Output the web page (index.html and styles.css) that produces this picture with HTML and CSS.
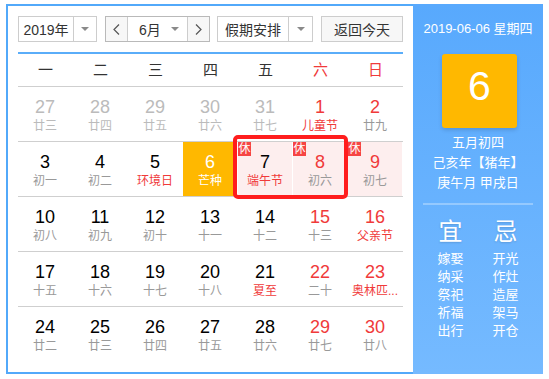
FILE: index.html
```html
<!DOCTYPE html>
<html lang="zh">
<head>
<meta charset="utf-8">
<title>万年历</title>
<link rel="stylesheet" href="styles.css">
</head>
<body>
<div class="cal">
  <div class="main">
    <div class="toolbar">
      <div class="select year">
        <span class="val">2019年</span>
        <span class="arr-box"><i class="arrow"></i></span>
      </div>
      <div class="month-group">
        <span class="nav nav-prev"><svg width="7" height="11" viewBox="0 0 7 11"><polyline points="6,0.5 1,5.5 6,10.5" fill="none" stroke="#555" stroke-width="1.2"/></svg></span>
        <span class="month"><span class="val">6月</span><i class="arrow"></i></span>
        <span class="nav nav-next"><svg width="7" height="11" viewBox="0 0 7 11"><polyline points="1,0.5 6,5.5 1,10.5" fill="none" stroke="#555" stroke-width="1.2"/></svg></span>
      </div>
      <div class="select holiday">
        <span class="val">假期安排</span>
        <span class="arr-box"><i class="arrow"></i></span>
      </div>
      <span class="today-btn">返回今天</span>
    </div>
    <div class="divider"></div>
    <div class="weekdays">
      <span>一</span><span>二</span><span>三</span><span>四</span><span>五</span><span class="red">六</span><span class="red">日</span>
    </div>
    <div class="week">
      <div class="cell other"><div class="num">27</div><div class="lunar">廿三</div></div>
      <div class="cell other"><div class="num">28</div><div class="lunar">廿四</div></div>
      <div class="cell other"><div class="num">29</div><div class="lunar">廿五</div></div>
      <div class="cell other"><div class="num">30</div><div class="lunar">廿六</div></div>
      <div class="cell other"><div class="num">31</div><div class="lunar">廿七</div></div>
      <div class="cell weekend"><div class="num">1</div><div class="lunar fest">儿童节</div></div>
      <div class="cell weekend"><div class="num">2</div><div class="lunar">廿九</div></div>
    </div>
    <div class="week">
      <div class="cell"><div class="num">3</div><div class="lunar">初一</div></div>
      <div class="cell"><div class="num">4</div><div class="lunar">初二</div></div>
      <div class="cell"><div class="num">5</div><div class="lunar fest">环境日</div></div>
      <div class="cell today"><div class="num">6</div><div class="lunar">芒种</div></div>
      <div class="cell rest-day"><span class="rest">休</span><div class="num">7</div><div class="lunar fest">端午节</div></div>
      <div class="cell rest-day weekend"><span class="rest">休</span><div class="num">8</div><div class="lunar">初六</div></div>
      <div class="cell rest-day weekend"><span class="rest">休</span><div class="num">9</div><div class="lunar">初七</div></div>
      <div class="mark"></div>
    </div>
    <div class="week">
      <div class="cell"><div class="num">10</div><div class="lunar">初八</div></div>
      <div class="cell"><div class="num">11</div><div class="lunar">初九</div></div>
      <div class="cell"><div class="num">12</div><div class="lunar">初十</div></div>
      <div class="cell"><div class="num">13</div><div class="lunar">十一</div></div>
      <div class="cell"><div class="num">14</div><div class="lunar">十二</div></div>
      <div class="cell weekend"><div class="num">15</div><div class="lunar">十三</div></div>
      <div class="cell weekend"><div class="num">16</div><div class="lunar fest">父亲节</div></div>
    </div>
    <div class="week">
      <div class="cell"><div class="num">17</div><div class="lunar">十五</div></div>
      <div class="cell"><div class="num">18</div><div class="lunar">十六</div></div>
      <div class="cell"><div class="num">19</div><div class="lunar">十七</div></div>
      <div class="cell"><div class="num">20</div><div class="lunar">十八</div></div>
      <div class="cell"><div class="num">21</div><div class="lunar fest">夏至</div></div>
      <div class="cell weekend"><div class="num">22</div><div class="lunar">二十</div></div>
      <div class="cell weekend"><div class="num">23</div><div class="lunar fest">奥林匹...</div></div>
    </div>
    <div class="week">
      <div class="cell"><div class="num">24</div><div class="lunar">廿二</div></div>
      <div class="cell"><div class="num">25</div><div class="lunar">廿三</div></div>
      <div class="cell"><div class="num">26</div><div class="lunar">廿四</div></div>
      <div class="cell"><div class="num">27</div><div class="lunar">廿五</div></div>
      <div class="cell"><div class="num">28</div><div class="lunar">廿六</div></div>
      <div class="cell weekend"><div class="num">29</div><div class="lunar">廿七</div></div>
      <div class="cell weekend"><div class="num">30</div><div class="lunar">廿八</div></div>
    </div>
  </div>
  <div class="side">
    <div class="side-date">2019-06-06 星期四</div>
    <div class="big-day">6</div>
    <div class="lunar-info">
      <div>五月初四</div>
      <div>己亥年【猪年】</div>
      <div>庚午月 甲戌日</div>
    </div>
    <div class="sep"></div>
    <div class="yiji">
      <div class="yj-col">
        <div class="yj-title">宜</div>
        <div class="yj-items"><div>嫁娶</div><div>纳采</div><div>祭祀</div><div>祈福</div><div>出行</div></div>
      </div>
      <div class="yj-col">
        <div class="yj-title">忌</div>
        <div class="yj-items"><div>开光</div><div>作灶</div><div>造屋</div><div>架马</div><div>开仓</div></div>
      </div>
    </div>
  </div>
</div>
</body>
</html>
```

FILE: styles.css
```css
* { box-sizing: border-box; margin: 0; padding: 0; }
body {
  margin: 0;
  background: #fff;
  font-family: "Liberation Sans", "Noto Sans CJK SC", sans-serif;
  color: #333;
}
.cal {
  display: flex;
  margin: 4px 0 0 6px;
  width: 537px;
  height: 370px;
}
.main {
  width: 407px;
  border: 2px solid #52a9fa;
  border-right: none;
  padding: 10px 10px 0 10px;
}
.toolbar {
  display: flex;
  height: 26px;
  font-size: 14px;
  color: #333;
}
.select {
  display: flex;
  align-items: stretch;
  height: 26px;
  border: 1px solid #cdcdcd;
  background: #fff;
}
.select .val {
  display: flex;
  align-items: center;
  justify-content: center;
}
.arr-box {
  display: flex;
  align-items: center;
  justify-content: center;
  border-left: 1px solid #cdcdcd;
}
.arrow {
  display: block;
  width: 0;
  height: 0;
  border-left: 4px solid transparent;
  border-right: 4px solid transparent;
  border-top: 4px solid #8a8a8a;
}
.year { width: 79px; }
.year .val { width: 54px; }
.year .arr-box { width: 23px; }
.month-group {
  display: flex;
  width: 105px;
  height: 26px;
  margin-left: 8px;
  border: 1px solid #b9b9b9;
  background: #fff;
}
.nav {
  width: 22px;
  display: flex;
  align-items: center;
  justify-content: center;
  background: #f7f7f7;
}
.nav-prev { border-right: 1px solid #cdcdcd; }
.nav-next { border-left: 1px solid #cdcdcd; }
.month {
  flex: 1;
  display: flex;
  align-items: center;
  padding: 0 8px 0 11px;
}
.month .val { flex: 1; }
.holiday { width: 96px; margin-left: 7px; }
.holiday .val { width: 70px; }
.holiday .arr-box { width: 24px; }
.today-btn {
  margin-left: auto;
  width: 82px;
  height: 26px;
  border: 1px solid #cdcdcd;
  background: #f7f7f7;
  display: flex;
  align-items: center;
  justify-content: center;
}
.divider {
  margin-top: 10px;
  height: 2px;
  background: #5aadf9;
}
.weekdays {
  display: grid;
  grid-template-columns: repeat(7, 55px);
  height: 32px;
  line-height: 32px;
  text-align: center;
  font-size: 15px;
  color: #333;
}
.weekdays .red { color: #f03a3a; }
.week {
  position: relative;
  display: grid;
  grid-template-columns: repeat(7, 55px);
  border-top: 1px solid #cfcfcf;
}
.cell {
  position: relative;
  height: 54px;
  border-right: 1px solid #fff;
  padding-top: 10px;
  text-align: center;
}
.num {
  font-size: 18px;
  line-height: 20px;
  color: #000;
}
.lunar {
  margin-top: 1px;
  font-size: 12px;
  line-height: 16px;
  color: #999;
  white-space: nowrap;
}
.weekend .num { color: #f03a3a; }
.lunar.fest { color: #f03a3a; }
.other .num, .other .lunar { color: #bbb; }
.today { background: #ffb800; }
.today .num, .today .lunar { color: #fff; }
.rest-day { background: #fdeeee; }
.rest {
  position: absolute;
  left: 0;
  top: 0;
  width: 13px;
  height: 14px;
  background: #f64444;
  color: #fff;
  font-size: 12px;
  line-height: 14px;
  text-align: center;
}
.mark {
  position: absolute;
  left: 215px;
  top: -7px;
  width: 115px;
  height: 64px;
  border: 4px solid #ff1d1d;
  border-radius: 5px;
  z-index: 2;
}
.side {
  width: 130px;
  background: linear-gradient(#58a9fd, #75baff);
  color: #fff;
  display: flex;
  flex-direction: column;
  align-items: center;
  padding-top: 15px;
}
.side-date {
  font-size: 13px;
  line-height: 20px;
}
.big-day {
  width: 75px;
  height: 74px;
  margin-top: 15px;
  margin-left: 3px;
  background: #ffb800;
  border-radius: 3px;
  box-shadow: 0 2px 4px rgba(0, 0, 0, 0.15);
  font-size: 41px;
  line-height: 64px;
  text-align: center;
}
.lunar-info {
  margin-top: 5px;
  font-size: 13px;
  line-height: 20px;
  text-align: center;
}
.sep {
  width: 110px;
  height: 2px;
  margin-top: 10px;
  background: rgba(255, 255, 255, 0.3);
}
.yiji {
  display: flex;
  width: 110px;
  margin-top: 12px;
}
.yj-col {
  width: 55px;
  text-align: center;
}
.yj-title {
  font-size: 24px;
  line-height: 30px;
  text-shadow: 0 1px 2px rgba(0, 0, 0, 0.15);
}
.yj-items {
  margin-top: 3px;
  font-size: 13px;
  line-height: 18px;
}
```
